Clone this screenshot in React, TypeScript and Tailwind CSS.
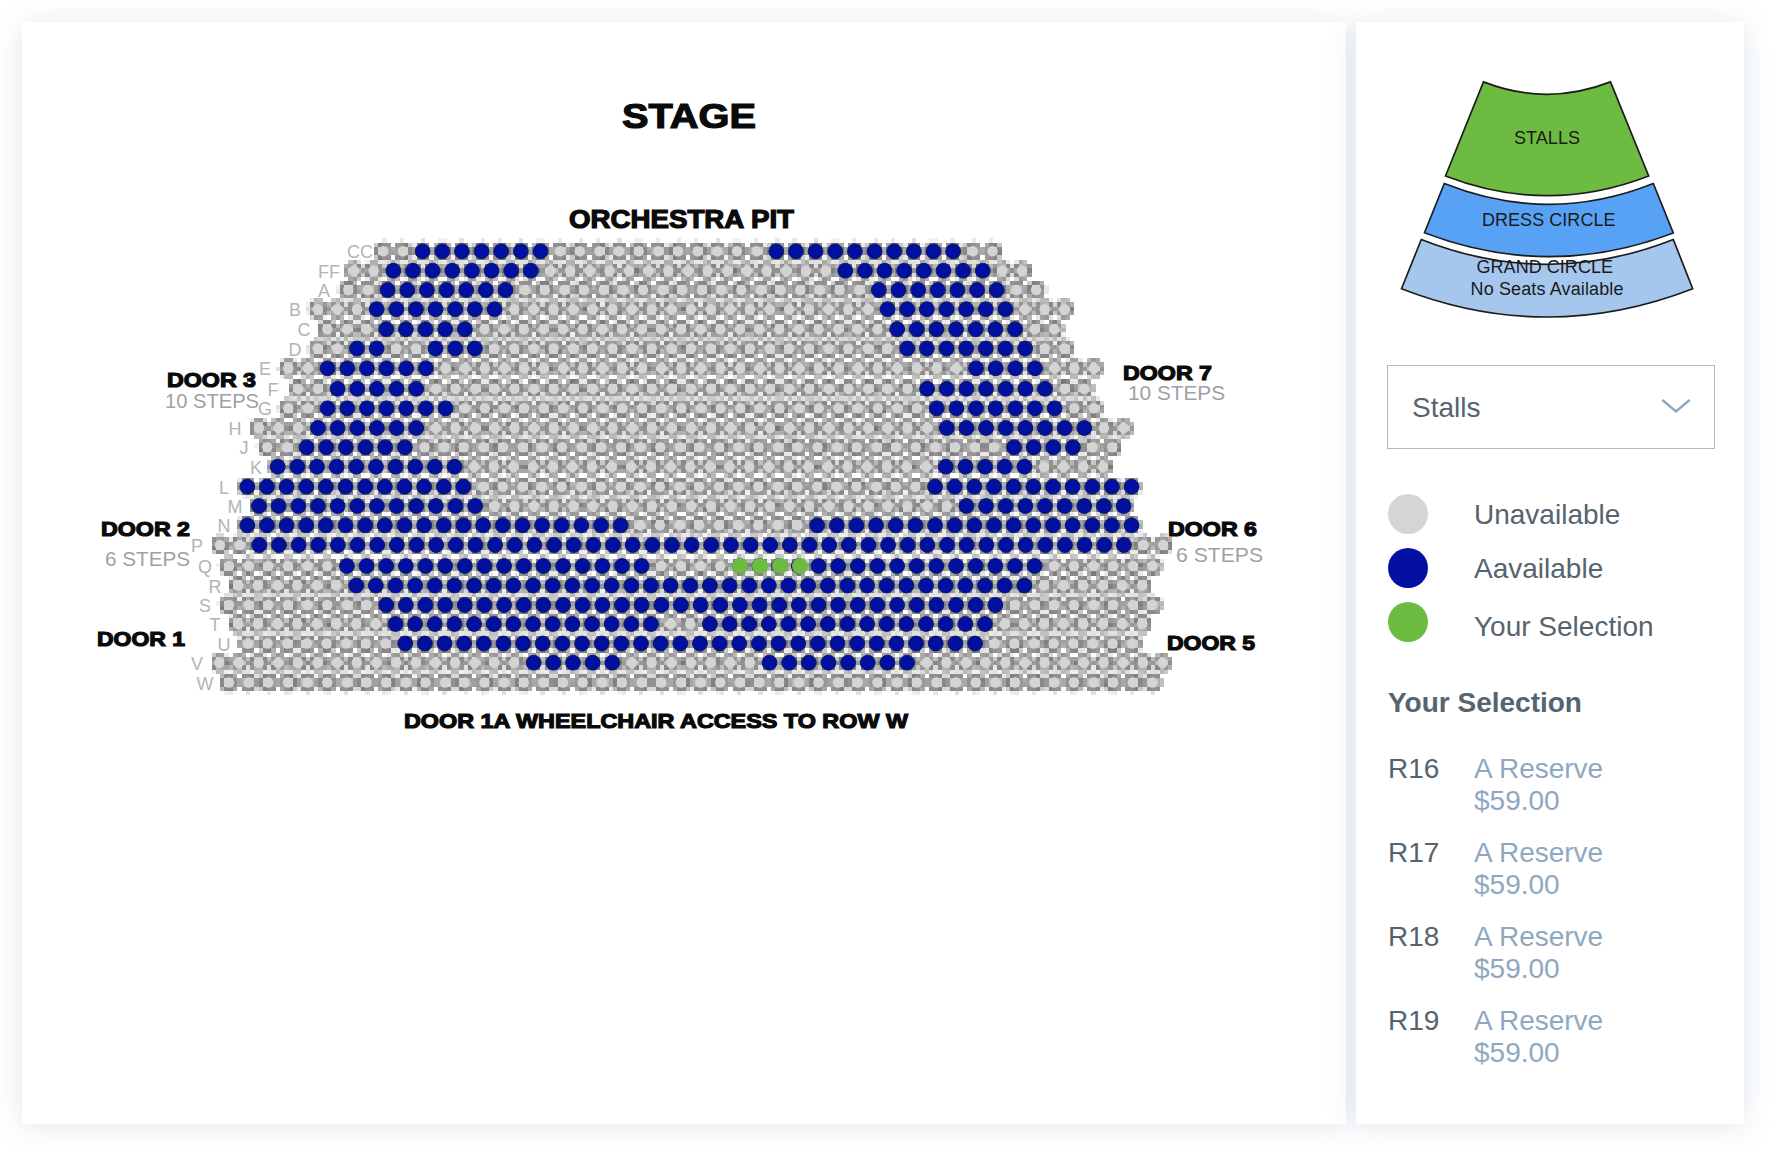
import React from 'react';

type Span = [number, number];
type Row = { label: string; x: number; y: number; count: number; open: Span[]; lx: number };

const PITCH = 19.65;
const CELL = 4.27;
const OX = 211.67;
const OY = 238.4;

const rows: Row[] = [
  { label: 'CC', x: 383.3, y: 251.3, count: 32, open: [[2, 8], [20, 29]], lx: 360 },
  { label: 'FF', x: 354, y: 270.7, count: 35, open: [[2, 9], [25, 32]], lx: 329 },
  { label: 'A', x: 348.3, y: 290, count: 36, open: [[2, 8], [27, 33]], lx: 324 },
  { label: 'B', x: 317.7, y: 309.2, count: 39, open: [[3, 9], [29, 35]], lx: 295 },
  { label: 'C', x: 327.3, y: 329.2, count: 38, open: [[3, 7], [29, 35]], lx: 304 },
  { label: 'D', x: 317.7, y: 348.5, count: 39, open: [[2, 3], [6, 8], [30, 36]], lx: 295 },
  { label: 'E', x: 288.3, y: 368.3, count: 42, open: [[2, 7], [35, 38]], lx: 265 },
  { label: 'F', x: 298.3, y: 388.8, count: 41, open: [[2, 6], [32, 38]], lx: 273 },
  { label: 'G', x: 288.3, y: 408.3, count: 42, open: [[2, 8], [33, 39]], lx: 265 },
  { label: 'H', x: 259, y: 428, count: 45, open: [[3, 8], [35, 42]], lx: 235 },
  { label: 'J', x: 267.3, y: 447.3, count: 44, open: [[2, 7], [38, 41]], lx: 244 },
  { label: 'K', x: 277.7, y: 466.7, count: 43, open: [[0, 9], [34, 38]], lx: 256 },
  { label: 'L', x: 247.3, y: 486.7, count: 46, open: [[0, 11], [35, 45]], lx: 224 },
  { label: 'M', x: 259, y: 506, count: 45, open: [[0, 11], [36, 44]], lx: 235 },
  { label: 'N', x: 247.3, y: 525.3, count: 46, open: [[0, 19], [29, 45]], lx: 224 },
  { label: 'P', x: 220, y: 545, count: 49, open: [[2, 46]], lx: 197 },
  { label: 'Q', x: 229, y: 566, count: 48, open: [[6, 21], [26, 41]], lx: 205 },
  { label: 'R', x: 238.3, y: 585.5, count: 47, open: [[6, 40]], lx: 215 },
  { label: 'S', x: 229, y: 605, count: 48, open: [[8, 39]], lx: 205 },
  { label: 'T', x: 238.3, y: 624, count: 47, open: [[8, 21], [24, 38]], lx: 215 },
  { label: 'U', x: 248, y: 643.5, count: 46, open: [[8, 37]], lx: 224 },
  { label: 'V', x: 219.3, y: 662.7, count: 49, open: [[16, 20], [28, 35]], lx: 197 },
  { label: 'W', x: 229, y: 682.5, count: 48, open: [], lx: 205 },
];

type Seat = { x: number; y: number; open: boolean };
const seats: Seat[] = rows.flatMap((r) =>
  Array.from({ length: r.count }, (_, k) => ({
    x: r.x + k * PITCH,
    y: r.y,
    open: r.open.some(([a, b]) => k >= a && k <= b),
  })),
);

const W = 226;
const H = 110;

// Rasterises the seat outlines onto a coarse grid, one path per grey level.
function rasteriseRings(): [string, string][] {
  const N = 4;
  const samples = new Array<number>(W * H * N * N).fill(255);
  seats.forEach((s) => {
    const ux = (s.x - OX) / CELL;
    const uy = (s.y - OY) / CELL;
    for (let j = Math.floor((uy - 3) * N); j < (uy + 3) * N; j++) {
      for (let i = Math.floor((ux - 3) * N); i < (ux + 3) * N; i++) {
        if (i < 0 || j < 0 || i >= W * N || j >= H * N) continue;
        const d = Math.hypot((i + 0.5) / N - ux, (j + 0.5) / N - uy);
        if (d > 2.2) continue;
        samples[j * W * N + i] = !s.open && d < 1.35 ? 214 : 118;
      }
    }
  });
  const paths = new Map<string, string>();
  for (let y = 0; y < H; y++) {
    for (let x = 0; x < W; x++) {
      let v = 0;
      for (let j = 0; j < N; j++) for (let i = 0; i < N; i++) v += samples[(y * N + j) * W * N + x * N + i];
      v = Math.round(v / N / N / 8) * 8;
      if (v > 246) continue;
      const key = `rgb(${v},${v},${v})`;
      paths.set(key, (paths.get(key) ?? '') + `M${x} ${y}h1v1h-1z`);
    }
  }
  return [...paths.entries()];
}

const ringPaths = rasteriseRings();

type Label = { t: string; x: number; y: number; w: number; s: number; light?: boolean };
const labels: Label[] = [
  { t: 'STAGE', x: 622, y: 127.5, w: 134, s: 35 },
  { t: 'ORCHESTRA PIT', x: 569, y: 227.5, w: 225, s: 25 },
  { t: 'DOOR 3', x: 167, y: 387, w: 89, s: 21 },
  { t: '10 STEPS', x: 165, y: 408, w: 94, s: 21, light: true },
  { t: 'DOOR 7', x: 1123, y: 380, w: 89, s: 21 },
  { t: '10 STEPS', x: 1128, y: 400, w: 97, s: 21, light: true },
  { t: 'DOOR 2', x: 101, y: 536, w: 89, s: 21 },
  { t: '6 STEPS', x: 105, y: 566, w: 85, s: 21, light: true },
  { t: 'DOOR 1', x: 97, y: 646, w: 88, s: 21 },
  { t: 'DOOR 6', x: 1168, y: 536, w: 89, s: 21 },
  { t: '6 STEPS', x: 1176, y: 562, w: 87, s: 21, light: true },
  { t: 'DOOR 5', x: 1167, y: 650, w: 88, s: 21 },
  { t: 'DOOR 1A WHEELCHAIR ACCESS TO ROW W', x: 404, y: 728, w: 504, s: 21 },
];

function SeatMap() {
  return (
    <svg className="block h-[1102px] w-[1324px]" viewBox="22 22 1324 1102" fontFamily='"Liberation Sans", Arial, sans-serif'>
      <g transform={`translate(${OX} ${OY}) scale(${CELL})`} shapeRendering="crispEdges">
        {ringPaths.map(([c, d]) => (
          <path key={c} d={d} fill={c} />
        ))}
      </g>
      {seats.map((s) =>
        s.open ? (
          <circle key={`${s.x}-${s.y}`} cx={s.x} cy={s.y} r={7.4} fill="#0210a0" stroke="#0c1a66" strokeWidth={1} />
        ) : (
          <circle key={`${s.x}-${s.y}`} cx={s.x} cy={s.y} r={5.2} fill="#d4d4d4" />
        ),
      )}
      {[740, 760, 780, 800].map((x) => (
        <circle key={x} cx={x} cy={566} r={8} fill="#6dbb40" />
      ))}
      {rows.map((r) => (
        <text key={r.label} x={r.lx} y={r.y + 7} textAnchor="middle" fontSize={18} fill="#b3b3b8">
          {r.label}
        </text>
      ))}
      {labels.map((l) => (
        <text
          key={l.t + l.x}
          x={l.x}
          y={l.y}
          fontSize={l.s}
          textLength={l.w}
          lengthAdjust="spacingAndGlyphs"
          fontWeight={l.light ? 400 : 700}
          fill={l.light ? '#a0a0a8' : '#0a0a0a'}
          stroke={l.light ? 'none' : '#0a0a0a'}
          strokeWidth={l.light ? 0 : 1.2}
        >
          {l.t}
        </text>
      ))}
    </svg>
  );
}

function SectionMap() {
  return (
    <svg className="ml-[44px] block h-[242px] w-[296px] shrink-0" viewBox="1400 78 296 242" fontFamily='"Liberation Sans", Arial, sans-serif' fontSize={18}>
      <g stroke="#1c1c1c" strokeWidth={1.7}>
        <path d="M1401.5 288.7 1421.3 239.5Q1547.3 289.1 1673.3 239.5L1692.7 288.7Q1547 345.3 1401.5 288.7Z" fill="#a6c7ed" />
        <path d="M1424.5 232.8 1444.3 183.5Q1549 225.1 1653.3 183.5L1673.3 233Q1549 280.4 1424.5 232.8Z" fill="#58a2f5" />
        <path d="M1445.5 176 1483.5 81.9Q1547 106.7 1610.5 81.9L1648.7 176Q1547 215.4 1445.5 176Z" fill="#6dbb40" />
      </g>
      <g fill="#1a1a1a">
        <text x={1514} y={144} textLength={66}>STALLS</text>
        <text x={1482} y={225.5} textLength={133.5}>DRESS CIRCLE</text>
        <text x={1476.5} y={272.7} textLength={136.5}>GRAND CIRCLE</text>
        <text x={1470.5} y={294.7} textLength={153}>No Seats Available</text>
      </g>
    </svg>
  );
}

const legend = [
  { label: 'Unavailable', dot: 'bg-[#d5d5d5]', text: 'pt-[5px]' },
  { label: 'Aavailable', dot: 'bg-[#0411a0]', text: 'pt-[5px]' },
  { label: 'Your Selection', dot: 'bg-[#6dbb40]', text: 'pt-[9px]' },
];

const panel = 'bg-white shadow-[0_2px_28px_rgba(120,145,175,0.22)]';

export default function App() {
  return (
    <div className="flex h-[1150px] w-[1770px] gap-[10px] overflow-hidden bg-white pt-[22px] pl-[22px] font-['Liberation_Sans',Arial,sans-serif] text-[28px] leading-8 text-[#55646e]">
      <main className={`h-[1102px] w-[1324px] shrink-0 ${panel}`}>
        <SeatMap />
      </main>
      <aside className={`flex h-[1102px] w-[388px] shrink-0 flex-col pt-[56px] ${panel}`}>
        <SectionMap />
        <button className="mt-[45px] ml-[31px] flex h-[84px] w-[328px] shrink-0 items-center justify-between border border-[#b4b6b8] pr-[23px] pl-6 text-left">
          <span className="pt-0.5">Stalls</span>
          <svg className="h-4 w-[30px]" viewBox="0 0 30 16" fill="none" stroke="#8da6c0" strokeWidth={2.4}>
            <path d="M1.3 1 15 12.5 28.7 1" />
          </svg>
        </button>
        <ul className="mt-[45px] ml-8 flex flex-col gap-[14px]">
          {legend.map((l) => (
            <li key={l.label} className="flex h-10 gap-[46px]">
              <span className={`size-10 shrink-0 rounded-full ${l.dot}`} />
              <span className={l.text}>{l.label}</span>
            </li>
          ))}
        </ul>
        <h2 className="mt-[45px] ml-8 font-bold">Your Selection</h2>
        <ul className="mt-[34px] ml-8 flex flex-col gap-5">
          {['R16', 'R17', 'R18', 'R19'].map((seat) => (
            <li key={seat} className="flex">
              <span className="w-[86px]">{seat}</span>
              <span className="flex flex-col text-[#8fa8c1]">
                <span>A Reserve</span>
                <span>$59.00</span>
              </span>
            </li>
          ))}
        </ul>
      </aside>
    </div>
  );
}
